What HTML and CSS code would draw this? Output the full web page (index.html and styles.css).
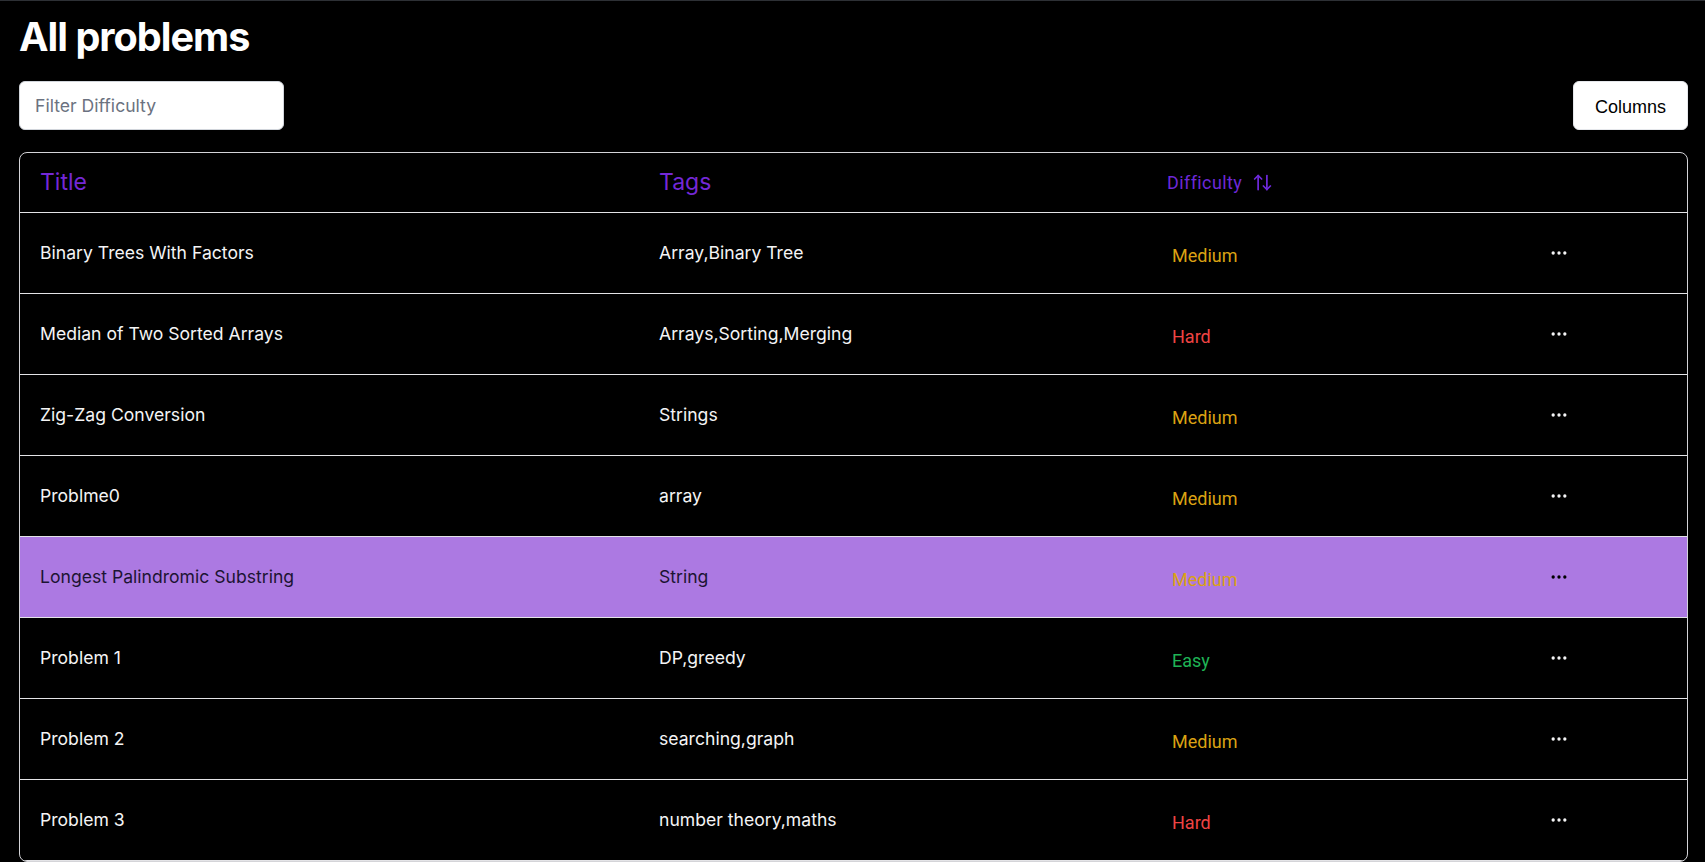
FILE: index.html
```html
<!DOCTYPE html>
<html lang="en">
<head>
<meta charset="utf-8">
<title>All problems</title>
<link rel="stylesheet" href="styles.css">
</head>
<body>
<main class="page">
  <h1 class="page-title">All problems</h1>
  <div class="toolbar">
    <input class="filter" type="text" placeholder="Filter Difficulty">
    <button class="columns-btn" type="button">Columns</button>
  </div>
  <div class="table">
    <div class="row head">
      <div class="cell"><span class="head-label">Title</span></div>
      <div class="cell"><span class="head-label">Tags</span></div>
      <div class="cell">
        <button class="sort-btn" type="button">Difficulty
          <svg class="sort-icon" viewBox="0 0 24 24" fill="none" stroke="currentColor" stroke-width="2" stroke-linecap="round" stroke-linejoin="round"><path d="m21 16-4 4-4-4"/><path d="M17 20V4"/><path d="m3 8 4-4 4 4"/><path d="M7 4v16"/></svg>
        </button>
      </div>
      <div class="cell"></div>
    </div>

    <div class="row">
      <div class="cell">Binary Trees With Factors</div>
      <div class="cell">Array,Binary Tree</div>
      <div class="cell"><span class="diff medium">Medium</span></div>
      <div class="cell"><svg class="dots" viewBox="0 0 24 24" fill="none" stroke="currentColor" stroke-width="2"><circle cx="5" cy="12" r="1"/><circle cx="12" cy="12" r="1"/><circle cx="19" cy="12" r="1"/></svg></div>
    </div>
    <div class="row">
      <div class="cell">Median of Two Sorted Arrays</div>
      <div class="cell">Arrays,Sorting,Merging</div>
      <div class="cell"><span class="diff hard">Hard</span></div>
      <div class="cell"><svg class="dots" viewBox="0 0 24 24" fill="none" stroke="currentColor" stroke-width="2"><circle cx="5" cy="12" r="1"/><circle cx="12" cy="12" r="1"/><circle cx="19" cy="12" r="1"/></svg></div>
    </div>
    <div class="row">
      <div class="cell">Zig-Zag Conversion</div>
      <div class="cell">Strings</div>
      <div class="cell"><span class="diff medium">Medium</span></div>
      <div class="cell"><svg class="dots" viewBox="0 0 24 24" fill="none" stroke="currentColor" stroke-width="2"><circle cx="5" cy="12" r="1"/><circle cx="12" cy="12" r="1"/><circle cx="19" cy="12" r="1"/></svg></div>
    </div>
    <div class="row">
      <div class="cell">Problme0</div>
      <div class="cell">array</div>
      <div class="cell"><span class="diff medium">Medium</span></div>
      <div class="cell"><svg class="dots" viewBox="0 0 24 24" fill="none" stroke="currentColor" stroke-width="2"><circle cx="5" cy="12" r="1"/><circle cx="12" cy="12" r="1"/><circle cx="19" cy="12" r="1"/></svg></div>
    </div>
    <div class="row selected">
      <div class="cell">Longest Palindromic Substring</div>
      <div class="cell">String</div>
      <div class="cell"><span class="diff medium">Medium</span></div>
      <div class="cell"><svg class="dots" viewBox="0 0 24 24" fill="none" stroke="currentColor" stroke-width="2"><circle cx="5" cy="12" r="1"/><circle cx="12" cy="12" r="1"/><circle cx="19" cy="12" r="1"/></svg></div>
    </div>
    <div class="row">
      <div class="cell">Problem 1</div>
      <div class="cell">DP,greedy</div>
      <div class="cell"><span class="diff easy">Easy</span></div>
      <div class="cell"><svg class="dots" viewBox="0 0 24 24" fill="none" stroke="currentColor" stroke-width="2"><circle cx="5" cy="12" r="1"/><circle cx="12" cy="12" r="1"/><circle cx="19" cy="12" r="1"/></svg></div>
    </div>
    <div class="row">
      <div class="cell">Problem 2</div>
      <div class="cell">searching,graph</div>
      <div class="cell"><span class="diff medium">Medium</span></div>
      <div class="cell"><svg class="dots" viewBox="0 0 24 24" fill="none" stroke="currentColor" stroke-width="2"><circle cx="5" cy="12" r="1"/><circle cx="12" cy="12" r="1"/><circle cx="19" cy="12" r="1"/></svg></div>
    </div>
    <div class="row">
      <div class="cell">Problem 3</div>
      <div class="cell">number theory,maths</div>
      <div class="cell"><span class="diff hard">Hard</span></div>
      <div class="cell"><svg class="dots" viewBox="0 0 24 24" fill="none" stroke="currentColor" stroke-width="2"><circle cx="5" cy="12" r="1"/><circle cx="12" cy="12" r="1"/><circle cx="19" cy="12" r="1"/></svg></div>
    </div>
  </div>
</main>
</body>
</html>
```
FILE: styles.css
```css
html, body {
  margin: 0;
  background: #000;
}

body {
  border-top: 1px solid #2d3035;
  font-family: "Inter", "Noto Sans", sans-serif;
  color: #f4f4f5;
  overflow: hidden;
}

.page {
  padding: 0 17px 0 19px;
}

.page-title {
  margin: 12px 0 0;
  font-size: 39.6px;
  line-height: 48px;
  font-weight: 700;
  letter-spacing: -0.025em;
  color: #fff;
}

.toolbar {
  margin-top: 20px;
  display: flex;
  justify-content: space-between;
  align-items: center;
}

.filter {
  box-sizing: border-box;
  width: 265px;
  height: 49px;
  padding: 0 15px;
  border: 1px solid #d1d5db;
  border-radius: 6px;
  background: #fff;
  font-family: "Inter", sans-serif;
  font-size: 17.6px;
  color: #111;
  outline: none;
}

.filter::placeholder {
  color: #6b7280;
}

.columns-btn {
  box-sizing: border-box;
  width: 115px;
  height: 49px;
  border: 1px solid #e5e7eb;
  border-radius: 6px;
  background: #fff;
  font-family: "Liberation Sans", Arial, sans-serif;
  font-size: 18px;
  color: #000;
  padding: 3px 0 0;
}

.table {
  margin-top: 22px;
  border: 1px solid #d4d4d8;
  border-radius: 8px;
  overflow: hidden;
}

.row {
  box-sizing: border-box;
  display: grid;
  grid-template-columns: 619px 508px 382px 1fr;
  align-items: center;
  height: 81px;
  border-bottom: 1px solid #e4e4e7;
  font-size: 17.6px;
}

.row.head {
  height: 60px;
}

.cell {
  padding-left: 20px;
  padding-bottom: 1px;
  display: flex;
  align-items: center;
}

.head-label {
  font-size: 23px;
  color: #7428d6;
}

.sort-btn {
  display: flex;
  align-items: center;
  gap: 10px;
  padding: 0;
  border: 0;
  background: none;
  font-family: "Roboto", sans-serif;
  font-size: 18px;
  letter-spacing: 0.4px;
  color: #6d28d9;
}

.sort-icon {
  width: 21px;
  height: 21px;
}

.diff {
  font-family: "Roboto", sans-serif;
  font-size: 18px;
  margin: 6px 0 0 5px;
}

.diff.medium { color: #dba213; }
.diff.hard { color: #ef4444; }
.diff.easy { color: #1fb355; }

.dots {
  width: 20px;
  height: 20px;
  color: #f4f4f5;
}

.row.selected {
  background: #ac79e2;
  color: #1c1433;
}

.row.selected .dots {
  color: #000;
}
```
